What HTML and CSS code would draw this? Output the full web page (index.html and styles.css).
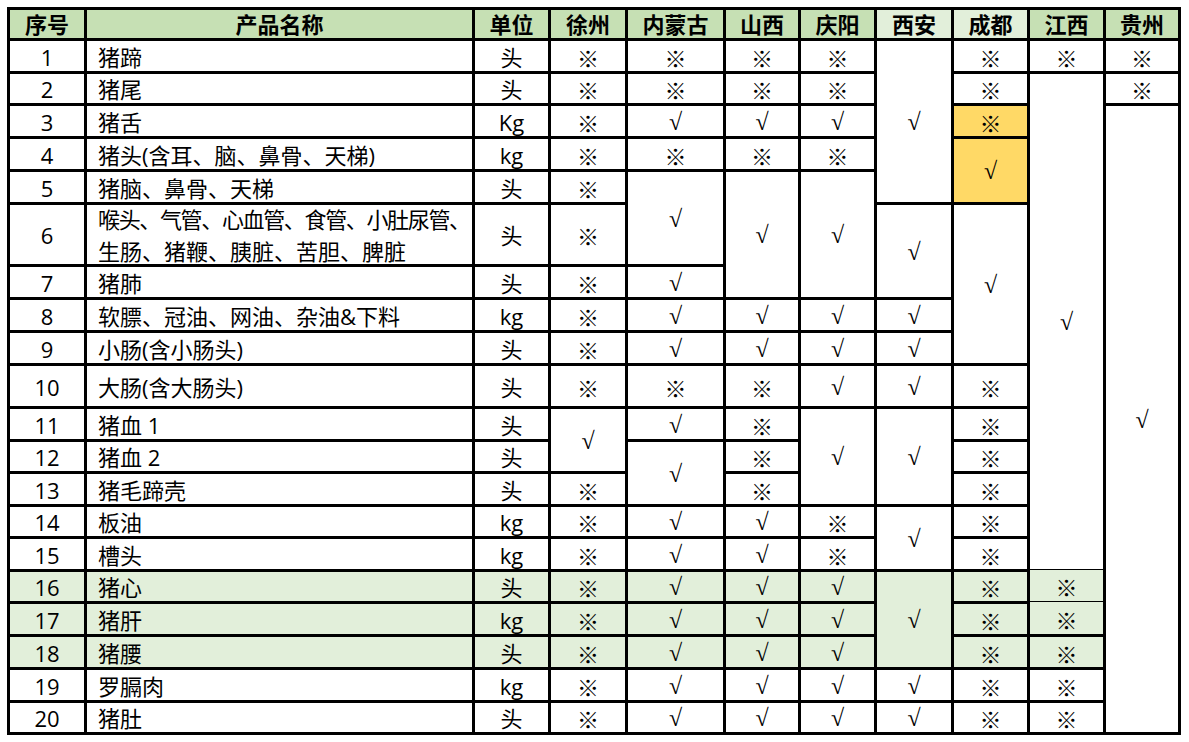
FILE: index.html
```html
<!DOCTYPE html>
<html lang="zh-CN">
<head>
<meta charset="utf-8">
<title>产品表</title>
<link rel="stylesheet" href="styles.css">
</head>
<body>
<div class="sheet">
  <div class="c hd">序号</div><div class="c hd">产品名称</div><div class="c hd">单位</div><div class="c hd">徐州</div><div class="c hd">内蒙古</div><div class="c hd">山西</div><div class="c hd">庆阳</div><div class="c hd lt">西安</div><div class="c hd lt">成都</div><div class="c hd">江西</div><div class="c hd">贵州</div>

  <div class="c">1</div><div class="c nm">猪蹄</div><div class="c">头</div><div class="c x">※</div><div class="c x">※</div><div class="c x">※</div><div class="c x">※</div><div class="c v s5">√</div><div class="c x">※</div><div class="c x">※</div><div class="c x">※</div>

  <div class="c">2</div><div class="c nm">猪尾</div><div class="c">头</div><div class="c x">※</div><div class="c x">※</div><div class="c x">※</div><div class="c x">※</div><div class="c x">※</div><div class="c v s14">√</div><div class="c x">※</div>

  <div class="c">3</div><div class="c nm">猪舌</div><div class="c">Kg</div><div class="c x">※</div><div class="c v">√</div><div class="c v">√</div><div class="c v">√</div><div class="c x yl">※</div><div class="c v s18">√</div>

  <div class="c">4</div><div class="c nm">猪头(含耳、脑、鼻骨、天梯)</div><div class="c">kg</div><div class="c x">※</div><div class="c x">※</div><div class="c x">※</div><div class="c x">※</div><div class="c v yl s2">√</div>

  <div class="c">5</div><div class="c nm">猪脑、鼻骨、天梯</div><div class="c">头</div><div class="c x">※</div><div class="c v s2">√</div><div class="c v s3">√</div><div class="c v s3">√</div>

  <div class="c">6</div><div class="c nm two"><div class="lines"><span class="tight">喉头、气管、心血管、食管、小肚尿管、</span><br>生肠、猪鞭、胰脏、苦胆、脾脏</div></div><div class="c">头</div><div class="c x">※</div><div class="c v s2">√</div><div class="c v s4">√</div>

  <div class="c">7</div><div class="c nm">猪肺</div><div class="c">头</div><div class="c x">※</div><div class="c v">√</div>

  <div class="c">8</div><div class="c nm">软膘、冠油、网油、杂油&amp;下料</div><div class="c">kg</div><div class="c x">※</div><div class="c v">√</div><div class="c v">√</div><div class="c v">√</div><div class="c v">√</div>

  <div class="c">9</div><div class="c nm">小肠(含小肠头)</div><div class="c">头</div><div class="c x">※</div><div class="c v">√</div><div class="c v">√</div><div class="c v">√</div><div class="c v">√</div>

  <div class="c">10</div><div class="c nm">大肠(含大肠头)</div><div class="c">头</div><div class="c x">※</div><div class="c x">※</div><div class="c x">※</div><div class="c v">√</div><div class="c v">√</div><div class="c x">※</div>

  <div class="c">11</div><div class="c nm">猪血 1</div><div class="c">头</div><div class="c v s2">√</div><div class="c v">√</div><div class="c x">※</div><div class="c v s3">√</div><div class="c v s3">√</div><div class="c x">※</div>

  <div class="c">12</div><div class="c nm">猪血 2</div><div class="c">头</div><div class="c v s2">√</div><div class="c x">※</div><div class="c x">※</div>

  <div class="c">13</div><div class="c nm">猪毛蹄壳</div><div class="c">头</div><div class="c x">※</div><div class="c x">※</div><div class="c x">※</div>

  <div class="c">14</div><div class="c nm">板油</div><div class="c">kg</div><div class="c x">※</div><div class="c v">√</div><div class="c v">√</div><div class="c x">※</div><div class="c v s2">√</div><div class="c x">※</div>

  <div class="c">15</div><div class="c nm">槽头</div><div class="c">kg</div><div class="c x">※</div><div class="c v">√</div><div class="c v">√</div><div class="c x">※</div><div class="c x">※</div>

  <div class="c gr">16</div><div class="c gr nm">猪心</div><div class="c gr">头</div><div class="c gr x">※</div><div class="c gr v">√</div><div class="c gr v">√</div><div class="c gr v">√</div><div class="c gr v s3">√</div><div class="c gr x">※</div><div class="c gr x thin">※</div>

  <div class="c gr">17</div><div class="c gr nm">猪肝</div><div class="c gr">kg</div><div class="c gr x">※</div><div class="c gr v">√</div><div class="c gr v">√</div><div class="c gr v">√</div><div class="c gr x">※</div><div class="c gr x thin">※</div>

  <div class="c gr">18</div><div class="c gr nm">猪腰</div><div class="c gr">头</div><div class="c gr x">※</div><div class="c gr v">√</div><div class="c gr v">√</div><div class="c gr v">√</div><div class="c gr x">※</div><div class="c gr x">※</div>

  <div class="c">19</div><div class="c nm">罗膈肉</div><div class="c">kg</div><div class="c x">※</div><div class="c v">√</div><div class="c v">√</div><div class="c v">√</div><div class="c v">√</div><div class="c x">※</div><div class="c x">※</div>

  <div class="c">20</div><div class="c nm">猪肚</div><div class="c">头</div><div class="c x">※</div><div class="c v">√</div><div class="c v">√</div><div class="c v">√</div><div class="c v">√</div><div class="c x">※</div><div class="c x">※</div>
</div>
</body>
</html>
```

FILE: styles.css
```css
html, body {
  margin: 0;
  padding: 0;
  background: #ffffff;
}

body {
  font-family: "Open Sans", "Noto Sans CJK SC", sans-serif;
  font-size: 22px;
  color: #000000;
}

.sheet {
  display: grid;
  width: max-content;
  margin: 7px 0 0 7px;
  padding: 3px;
  gap: 3px;
  background: #000000;
  grid-template-columns: 74px 385px 73px 74px 95px 72px 73px 74px 73px 73px 72px;
  grid-template-rows: 28px 30px 29px 30px 30px 30px 59px 30px 30px 30px 40px 30px 29px 30px 29px 30px 29px 30px 30px 30px 29px;
}

.c {
  background: #ffffff;
  display: flex;
  align-items: center;
  justify-content: center;
  line-height: 30px;
  white-space: nowrap;
  padding-top: 1px;
  box-sizing: border-box;
}

.hd {
  background: #c6e0b4;
  font-weight: 700;
  padding-top: 0;
}

.hd.lt {
  background: #e2efda;
}

.nm {
  justify-content: flex-start;
  padding-left: 11px;
}

.lines {
  line-height: 32px;
}

.tight {
  letter-spacing: -1.35px;
}

.x {
  font-family: "Noto Sans CJK SC", sans-serif;
  font-size: 22px;
}

.v {
  font-family: "Liberation Serif", serif;
  font-size: 24px;
}

.gr {
  background: #e2efda;
}

.yl {
  background: #ffd966;
}

.thin {
  margin-top: -2px;
}

.s2 { grid-row: span 2; }
.s3 { grid-row: span 3; }
.s4 { grid-row: span 4; }
.s5 { grid-row: span 5; }
.s14 { grid-row: span 14; }
.s18 { grid-row: span 18; }
```
